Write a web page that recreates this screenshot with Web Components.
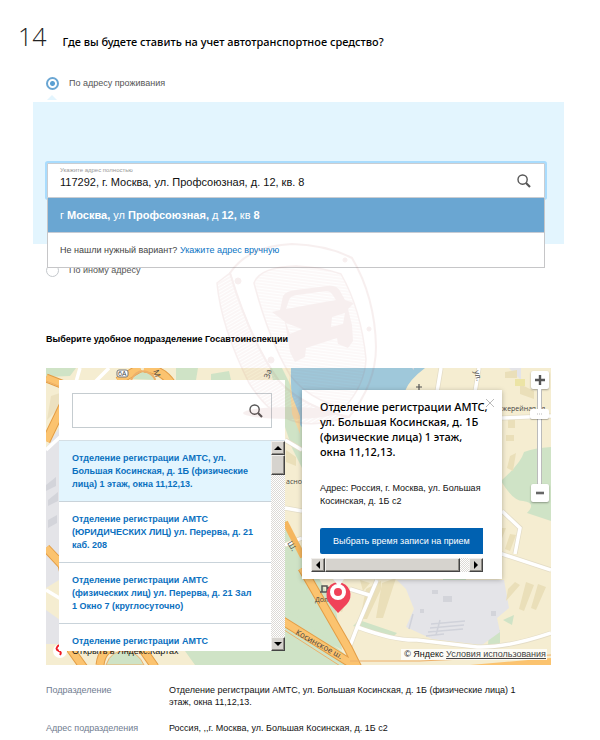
<!DOCTYPE html>
<html lang="ru">
<head>
<meta charset="utf-8">
<meta name="viewport" content="width=device-width, initial-scale=1">
<title>Постановка на учет</title>
<style>
body{margin:0;background:#fff;color:#111;font:9px/13px "Liberation Sans",Arial,sans-serif}
</style>
</head>
<body>
<registration-page></registration-page>
<script>
function define(name, html, setup) {
  const tpl = document.createElement('template');
  tpl.innerHTML = html;
  customElements.define(name, class extends HTMLElement {
    connectedCallback() {
      if (this.shadowRoot) return;
      const root = this.attachShadow({mode: 'open'});
      root.append(tpl.content.cloneNode(true));
      if (setup) setup(this, root);
    }
  });
}

define('question-title', `
<style>
:host{display:flex;align-items:baseline;gap:16px;padding:18px 18px 0;line-height:36px}
.n{font:300 25px/36px "Open Sans","Noto Sans",sans-serif;color:#222}
h1{margin:0;font:500 11px/36px "Noto Sans","Open Sans",sans-serif;color:#000}
</style>
<span class="n"><slot name="number"></slot></span><h1><slot></slot></h1>`);

define('radio-option', `
<style>
:host{display:block}
label{display:flex;align-items:center;gap:10px;height:20px;color:#555}
input{appearance:none;box-sizing:border-box;width:13px;height:13px;margin:0;border:1px solid #c4c8cc;border-radius:50%;background:#fff}
input:checked{border:2px solid #6aa6d3;background:radial-gradient(circle,#5a9fd2 0 2px,#fff 3px)}
</style>
<label><input type="radio" name="place"><span><slot></slot></span></label>`,
(el, root) => { root.querySelector('input').checked = el.hasAttribute('checked'); });

define('search-icon', `
<style>:host{display:block;width:14px;height:14px;flex:none}svg{display:block}</style>
<svg width="14" height="14" viewBox="0 0 14 14" fill="none" stroke="#555"><circle cx="5.6" cy="5.6" r="4.6" stroke-width="1.4"/><path d="M9 9l4 4" stroke-width="2.2"/></svg>`);

define('address-suggest', `
<style>
:host{display:block;position:relative}
.field{display:flex;align-items:center;box-sizing:border-box;height:35px;padding:0 13px 0 12px;border:1px solid #c9cdd2;background:#fff;box-shadow:0 0 0 2px #a9dcfd;border-radius:1px}
.text{flex:1;display:flex;flex-direction:column;min-width:0;padding-bottom:6px}
label{font-size:6px;line-height:8px;color:#999}
input{border:0;padding:0;margin:0;height:16px;background:none;outline:0;font:11px/16px "Liberation Sans",Arial,sans-serif;color:#111}
button{border:0;background:none;padding:0;margin:0}
.menu{position:absolute;left:0;right:0;top:35px;border:1px solid #c6c6c8;border-top:0;background:#fff;z-index:3}
.hit{display:block;width:100%;box-sizing:border-box;height:35px;padding:0 12px;background:#6aa6d2;color:#fff;text-align:left;font:11px/34px "Liberation Sans",Arial,sans-serif;border-bottom:1px solid #c6cbd4}
.none{height:34px;line-height:34px;padding:0 12px;color:#444}
a{color:#0a74c4;text-decoration:none}
</style>
<div class="field"><div class="text"><label for="a">Укажите адрес полностью</label><input id="a" type="text" value="117292, г. Москва, ул. Профсоюзная, д. 12, кв. 8"></div><button aria-label="Найти"><search-icon></search-icon></button></div>
<div class="menu"><button class="hit">г <b>Москва,</b> ул <b>Профсоюзная,</b> д <b>12,</b> кв <b>8</b></button><div class="none">Не нашли нужный вариант? <a href="#manual">Укажите адрес вручную</a></div></div>`);

define('address-panel', `
<style>
:host{display:block;position:relative;background:#e3f5fe;padding:61px 19px 46px 14px;margin-top:9px}
:host::before{content:"";position:absolute;left:14px;top:-7px;border:5px solid transparent;border-top:0;border-bottom-color:#e3f5fe}
</style><slot></slot>`);

define('classic-scrollbar', `
<style>
:host{display:flex;flex-direction:column;width:14px;flex:none;background:repeating-conic-gradient(#fff 0 25%,#dcd9d5 0 50%) 0 0/2px 2px}
:host([horizontal]){flex-direction:row;width:auto;height:14px}
button,i{display:grid;place-items:center;box-sizing:border-box;width:14px;height:14px;padding:0;margin:0;background:#d6d3ce;border:1px solid;border-color:#f1efec #444 #444 #f1efec;box-shadow:inset -1px -1px #8c8983;border-radius:0;flex:none}
i{height:20px}
:host([horizontal]) i{height:14px;width:auto;flex:1;margin-right:9px}
.end{margin-top:auto}
:host([horizontal]) .end{margin-top:0}
:host([horizontal]) svg{transform:rotate(-90deg)}
svg{display:block}
</style>
<button aria-label="Назад"><svg width="8" height="4"><path d="M0 4l4-4 4 4z"/></svg></button><i></i><button class="end" aria-label="Вперёд"><svg width="8" height="4"><path d="M0 0l4 4 4-4z"/></svg></button>`);

define('office-item', `
<style>
:host{display:block;border-bottom:1px solid #c9d3da;background:#fff}
:host([selected]){background:#e3f5fe}
a{display:block;padding:11px 16px 10px 13px;font-weight:700;color:#0a70c0;text-decoration:none}
</style><a href="#office"><slot></slot></a>`);

define('office-list', `
<style>
:host{display:block;box-sizing:border-box;width:226px;background:#fff;flex:none}
.search{display:flex;align-items:center;box-sizing:border-box;height:35px;margin:13px 13px 12px;padding:0 8px;border:1px solid #c5ccd0}
.search input{flex:1;min-width:0;border:0;outline:0;padding:0;font:11px "Liberation Sans",Arial,sans-serif}
.search button{border:0;background:none;padding:0}
.body{display:flex;height:210px;border-top:1px solid #d5dfe5}
.items{flex:1;overflow:hidden;min-width:0}
</style>
<div class="search"><input type="text" aria-label="Поиск подразделения"><button aria-label="Найти"><search-icon></search-icon></button></div>
<div class="body"><div class="items"><slot></slot></div><classic-scrollbar></classic-scrollbar></div>`);

define('office-balloon', `
<style>
:host{display:block;position:relative;box-sizing:border-box;width:200px;padding:9px 19px 7px 9px;background:#fff;box-shadow:0 1px 5px #0004;flex:none}
h2{margin:0 -7px 23px 9px;font:500 11px/15px "Noto Sans","Open Sans",sans-serif;color:#000}
p{margin:0 0 20px 9px}
.go{display:block;box-sizing:border-box;width:163px;height:26px;margin:0 0 4px 9px;padding:0 0 0 13px;border:0;border-radius:2px 0 0 2px;background:#0061b1;color:#fff;font:9px/26px "Liberation Sans",Arial,sans-serif;text-align:left;white-space:nowrap;overflow:hidden}
.close{position:absolute;right:7px;top:8px;width:10px;height:10px;border:0;background:none;padding:0}
svg{display:block}
</style>
<button class="close" aria-label="Закрыть"><svg width="10" height="10" stroke="#bbb" fill="none"><path d="M1 1l8 8M9 1l-8 8"/></svg></button>
<h2><slot name="title"></slot></h2><p><slot></slot></p>
<button class="go">Выбрать время записи на прием</button>
<classic-scrollbar horizontal></classic-scrollbar>`);

define('zoom-control', `
<style>
:host{display:flex;flex-direction:column;align-items:center;width:19px;height:131px;flex:none}
button{display:grid;place-items:center;width:18px;height:18px;padding:0;border:0;border-radius:2px;background:#fff;box-shadow:0 1px 2px #0005;flex:none}
.rail{flex:1;box-sizing:border-box;width:5px;border:1px solid #bbb;border-width:0 1px;background:#fff;display:flex;justify-content:center;padding-top:20px}
.knob{width:19px;height:10px;flex:none;border-radius:2px;background:#fff;box-shadow:0 1px 1px #0004;text-align:center;display:grid;place-items:center}
svg{display:block}
</style>
<button aria-label="Приблизить"><svg width="10" height="10" stroke="#555" stroke-width="2.4"><path d="M5 0v10M0 5h10"/></svg></button>
<div class="rail"><span class="knob"><svg width="6" height="2" stroke="#bbb"><path d="M0 1h6" stroke-dasharray="1"/></svg></span></div>
<button aria-label="Отдалить"><svg width="10" height="4" stroke="#666" stroke-width="2.6"><path d="M1 2h8"/></svg></button>`);

define('map-ground', `
<style>:host{display:block;position:absolute;inset:0;overflow:hidden}svg{display:block;width:100%;height:100%}text{font-family:"Open Sans","Noto Sans",sans-serif;font-size:8px;fill:#444}</style>
<svg viewBox="46 368 505 297" preserveAspectRatio="xMinYMin slice" fill="none">
<rect x="46" y="368" width="505" height="297" fill="#f5edd1"/>
<g fill="#cfe3c6">
<path d="M46 368h30l-6 8-24 1zM176 368h22l-2 12h-20zM211 374l18-3 2 9h-20z"/>
<path d="M284 518l24 40 28 52 6 40-57-32z"/><path d="M524 452q10-4 27-5v74l-24-8q10-10-4-12-10 0-22-20 20-18 23-29z"/>
<path d="M443 566h23v14q-12 12-23 4z"/><path d="M280 606l28 18 44 36v5H195l-10-14h95z"/><path d="M489 631l11-1v15h-12z"/><path d="M503 620l11-5-2 10zM359 620l38 13-4 4-40-11zM282 368h-12l12 50 10 30 10 20v-60z"/>
<path d="M133 379q5-10 16-7 7 3 6 8z"/>
</g>
<g fill="#e4e4e8"><path d="M46 448l13-20v152l-13 8zM397 580h107l5 28-12 10 3 14-18 13-50-6-26-12 8-18-8-20zM509 368h12v12z"/><path d="M46 610l14 10v24H46z"/></g>
<path d="M291 368h134q-16 12-20 23v14H306v25q-7-2-12-21-4-20-3-41z" fill="#9fc8da"/>
<path d="M289 374l3 40 8 20v-18l-8-20z" fill="#f3d8a2"/>
<g fill="#eadfb9">
<path d="M366 589l15-8v8l-14 30h-7zM382 583l14-5-13 40h-7zM360 580l10 3-7 8zM508 589l7-7 5 3-14 16zM526 582l8 3-10 26-5-2zM538 584l8 3-10 23-5-2zM505 372l12-2v8h-12zM520 384l14 7v8l-14-5zM340 592l8 4-6 16-8-3zM498 528h8l-7 18-6-2zM510 534l6 1-6 16-5-2zM508 420h7v8h-7zM506 435h8v6h-8zM286 450l10 7v9l-10-4zM510 456l6-3-3 18-6-3z"/>
<path d="M515 379h10v7h-10z" fill="#ece4a5"/><path d="M51 396l18-6-10 18-12 12z" fill="#ece1c0"/>
</g>
<g fill="#d3d4da"><path d="M412 368h2v2zM46 485l10-8v9l-10 5zM48 500l10-8v9l-10 5zM48 520l9-5v8l-9 5zM432 590h6v4h-6zM443 596h9v6h-9zM420 609h4v4h-4zM491 611h5v5h-5z"/><path d="M431 624l34-3M430 628l34-3M428 632l35-3M426 636l18-2M440 620l-4 15M413 614l-4 15" stroke="#d0d2da" stroke-width="1.5"/></g>
<g stroke="#e4ddc7" stroke-width="5"><path d="M377 580l-19 45-10 26M350 589l19 6M357 627q38 14 60 13l60 7q30 1 74-14M502 511l18 17-5 26M496 552l55 18M479 368l-4 24M441 368l-4 24M285 440l17 10M285 508l17 3M285 545l17-7M502 418l49-2"/></g>
<g stroke="#fff" stroke-width="3.5"><path d="M377 580l-19 45-10 26M350 589l19 6M357 627q38 14 60 13l60 7q30 1 74-14M502 511l18 17-5 26M496 552l55 18M479 368l-4 24M441 368l-4 24M285 440l17 10M285 508l17 3M285 545l17-7M502 418l49-2M46 450l14-13M46 590l15 9M109 368l-14 14M80 368l-4 14M160 368l8 13"/></g>
<g stroke="#e39d45" stroke-width="9"><path d="M46 378l18 7M72 387l-26 54M118 381l22-13M144 368q18 1 28 16M46 548l16 17M60 556l5 22M278 618l85 53M302 568l46 80 10 20M100 665q2-18 18-19l23 1 14 20M64 640l20 28"/></g>
<g stroke="#fbc36f" stroke-width="7"><path d="M46 378l18 7M72 387l-26 54M118 381l22-13M144 368q18 1 28 16M46 548l16 17M60 556l5 22M278 618l85 53M302 568l46 80 10 20M100 665q2-18 18-19l23 1 14 20M64 640l20 28"/></g>
<path d="M278 626l70 45M46 381l18 7M350 661h70l131-6" stroke="#edb06a" stroke-width="1"/>
<path d="M285 522l18 35" stroke="#f5b65e" stroke-width="6"/>
<path d="M470 665l81-7v7z" fill="#fbc36f"/>
<path d="M106 665q5-15 20-14 12 1 18 14z" fill="#cfe3c6" stroke="#edb06a"/>
<path d="M131 380q6-11 16-8 9 4 8 10" stroke="#edb06a" stroke-width="2"/>
<rect x="117" y="370" width="11" height="7" rx="2" fill="#fff" stroke="#777"/><text x="118" y="376" style="font-size:7px">6А</text>
<text transform="translate(269 379) rotate(-72)">За</text>
<text transform="translate(153 371) rotate(70)">М</text>
<text x="286" y="484" style="font-size:7px">асно</text><text transform="translate(287 543) rotate(58)">Ш.</text>
<text transform="translate(474 371) rotate(75)">ул.</text><text x="502" y="411" style="font-size:7px">жерейная ул.</text>
<text transform="translate(295 634) rotate(29)">Косинское ш.</text>
<text x="315" y="602" style="font-size:7px">Долг</text>
<path d="M419 384v6M416 387h6" stroke="#555" stroke-width="1.2"/>
<path d="M320 592h9M322 592v-6h5v6M328 587l2 3" stroke="#555" stroke-width="1.5"/>
<path d="M338 613l-8-9q-5-6-3-13 2-8 11-9 9 1 12 9 2 7-3 13z" fill="#f04259"/><path d="M333 579h11l-5 8z" fill="#fff"/><circle cx="338" cy="592" r="6" stroke="#fff" stroke-width="4"/><circle cx="338" cy="592" r="3" fill="#f04259"/>
<circle cx="60" cy="651" r="7" fill="#fff"/><path d="M59 645q-5 4 0 6 3 1 1 4" stroke="#ee1c25" stroke-width="2"/>
</svg>`);

define('office-map', `
<style>
:host{display:flex;align-items:flex-start;position:relative;padding:0 2px 14px 13px;overflow:hidden}
::slotted(*){position:relative}
::slotted(office-list){margin-top:12px}
::slotted(office-balloon){margin:22px 0 0 17px}
::slotted(zoom-control){margin:3px 0 0 auto}
.open{position:absolute;left:26px;bottom:8px;color:#111;text-decoration:none;line-height:11px}
.copy{position:absolute;right:4px;bottom:5px;line-height:11px;background:#fffc;padding:0 1px 0 3px;color:#111}
.copy a{color:#444}
</style>
<map-ground></map-ground>
<a class="open" href="#map">Открыть в Яндекс.Картах</a>
<slot></slot>
<span class="copy">© Яндекс <a href="#terms">Условия использования</a></span>`);

define('detail-row', `
<style>
:host{display:grid;grid-template-columns:111px 1fr;gap:12px;line-height:12px;padding-right:16px}
.k{color:#6f7c90}
</style><span class="k"><slot name="label"></slot></span><span><slot></slot></span>`);

define('shield-mark', `
<style>:host{display:block;position:absolute;left:210px;top:240px;width:175px;height:190px;pointer-events:none;z-index:5}svg{display:block}</style>
<svg width="175" height="190" viewBox="210 240 175 190" fill="none" stroke="#a84040" opacity=".08">
<defs><pattern id="h" width="6" height="3" patternUnits="userSpaceOnUse" patternTransform="rotate(7)"><path d="M0 1h6" stroke="#a84040" stroke-width=".8"/></pattern>
<pattern id="v" width="3" height="3" patternUnits="userSpaceOnUse" patternTransform="rotate(-30)"><path d="M0 1h3" stroke="#a84040" stroke-width="1.1"/></pattern></defs>
<path stroke-width="2" d="M230 273q18-27 62-29 35 1 60 14 23 39 24 89 0 37-27 70-45-9-70-36-29-41-49-108z"/>
<path stroke-width="1.5" d="M254 283q6-16 42-17 25 1 45 8 20 35 25 85-1 26-22 49-35-8-54-33-21-35-36-92z" fill="url(#h)"/>
<path stroke-width="1.5" d="M230 273l-13 10q4 44 32 100 18 28 35 34 20 11 48 4l17-4q-45-9-70-36-29-41-49-108z" fill="url(#v)"/>
<path fill-rule="evenodd" d="M272 312l8-2 3-14q3-5 13-6l31-4q10-1 13 5l5 9 9 3-6 6 4 16 1 16-5 7-10-4-1-6-31 10-1 9-10 5-5-10-5-30-5-4zM286 309l50-9-4-6q-2-3-6-3l-29 4q-7 1-8 5zM286 323l4 11 12-5zM332 317l-1 10 12-3 2-11z" fill="#a84040" stroke="none"/>
<circle cx="238" cy="281" r="3" fill="#a84040"/><circle cx="345" cy="260" r="2" fill="#a84040"/><circle cx="271" cy="360" r="3" fill="#a84040"/><circle cx="369" cy="329" r="2" fill="#a84040"/>
<ellipse cx="289" cy="413" rx="46" ry="6" fill="#a84040" stroke="none"/>
</svg>`);

define('registration-page', `
<style>
:host{display:block;position:relative}
.choice{padding:13px 36px 0 33px}
.choice radio-option{padding-left:13px}
.second{margin-top:16px}
.office{padding:49px 49px 0 46px}
h3{margin:0 0 19px;font:700 9px/20px "Liberation Sans",Arial,sans-serif;color:#000}
.details{display:flex;flex-direction:column;gap:14px;padding:19px 0 6px}
</style>
<question-title><span slot="number">14</span>Где вы будете ставить на учет автотранспортное средство?</question-title>
<div class="choice">
<radio-option checked>По адресу проживания</radio-option>
<address-panel><address-suggest></address-suggest></address-panel>
<radio-option class="second">По иному адресу</radio-option>
</div>
<div class="office">
<h3>Выберите удобное подразделение Госавтоинспекции</h3>
<office-map>
<office-list>
<office-item selected>Отделение регистрации АМТС, ул. Большая Косинская, д. 1Б (физические лица) 1 этаж, окна 11,12,13.</office-item>
<office-item>Отделение регистрации АМТС (ЮРИДИЧЕСКИХ ЛИЦ) ул. Перерва, д. 21 каб. 208</office-item>
<office-item>Отделение регистрации АМТС (физических лиц) ул. Перерва, д. 21 Зал 1 Окно 7 (круглосуточно)</office-item>
<office-item>Отделение регистрации АМТС</office-item>
</office-list>
<office-balloon><span slot="title">Отделение регистрации АМТС, ул. Большая Косинская, д. 1Б (физические лица) 1 этаж, окна 11,12,13.</span>Адрес: Россия, г. Москва, ул. Большая Косинская, д. 1Б с2</office-balloon>
<zoom-control></zoom-control>
</office-map>
<div class="details">
<detail-row><span slot="label">Подразделение</span>Отделение регистрации АМТС, ул. Большая Косинская, д. 1Б (физические лица) 1 этаж, окна 11,12,13.</detail-row>
<detail-row><span slot="label">Адрес подразделения</span>Россия, ,,г. Москва, ул. Большая Косинская, д. 1Б с2</detail-row>
</div>
</div>
<shield-mark></shield-mark>`);
</script>
</body>
</html>
